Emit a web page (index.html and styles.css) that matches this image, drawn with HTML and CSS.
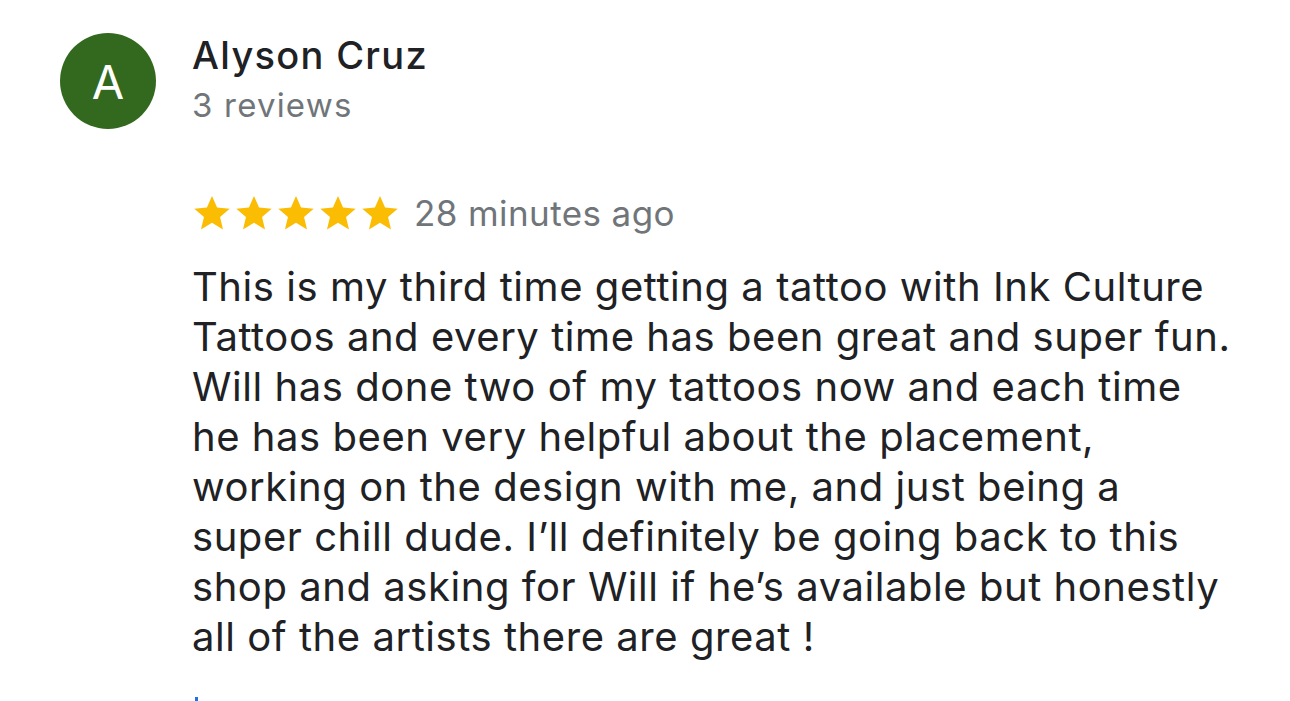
FILE: index.html
```html
<!DOCTYPE html>
<html>
<head>
<meta charset="utf-8">
<link rel="stylesheet" href="styles.css">
</head>
<body>
<div class="review">
  <div class="avatar">A</div>
  <div class="content">
    <div class="name">Alyson Cruz</div>
    <div class="count">3 reviews</div>
    <div class="meta">
      <div class="stars">
        <svg viewBox="0 0 24 24" class="star"><path d="M12 2.3l2.9 6.6 7.2.6-5.5 4.8 1.7 7.1L12 17.6l-6.3 3.8 1.7-7.1L1.9 9.5l7.2-.6z"/></svg>
        <svg viewBox="0 0 24 24" class="star"><path d="M12 2.3l2.9 6.6 7.2.6-5.5 4.8 1.7 7.1L12 17.6l-6.3 3.8 1.7-7.1L1.9 9.5l7.2-.6z"/></svg>
        <svg viewBox="0 0 24 24" class="star"><path d="M12 2.3l2.9 6.6 7.2.6-5.5 4.8 1.7 7.1L12 17.6l-6.3 3.8 1.7-7.1L1.9 9.5l7.2-.6z"/></svg>
        <svg viewBox="0 0 24 24" class="star"><path d="M12 2.3l2.9 6.6 7.2.6-5.5 4.8 1.7 7.1L12 17.6l-6.3 3.8 1.7-7.1L1.9 9.5l7.2-.6z"/></svg>
        <svg viewBox="0 0 24 24" class="star"><path d="M12 2.3l2.9 6.6 7.2.6-5.5 4.8 1.7 7.1L12 17.6l-6.3 3.8 1.7-7.1L1.9 9.5l7.2-.6z"/></svg>
      </div>
      <span class="time">28 minutes ago</span>
    </div>
    <p class="text">This is my third time getting a tattoo with Ink Culture<br>Tattoos and every time has been great and super fun.<br>Will has done two of my tattoos now and each time<br>he has been very helpful about the placement,<br>working on the design with me, and just being a<br>super chill dude. I’ll definitely be going back to this<br>shop and asking for Will if he’s available but honestly<br>all of the artists there are great !</p>
    <div class="more"></div>
  </div>
</div>
</body>
</html>
```
FILE: styles.css
```css
html, body {
  margin: 0;
  padding: 0;
  background: #ffffff;
  overflow: hidden;
}
body {
  font-family: Inter, "Liberation Sans", sans-serif;
  color: #202124;
}
.review {
  display: flex;
  gap: 36px;
  padding: 33px 0 0 60px;
}
.avatar {
  flex: none;
  width: 96px;
  height: 96px;
  border-radius: 50%;
  background: #33691e;
  color: #fff;
  font-size: 47px;
  display: flex;
  align-items: center;
  justify-content: center;
}
.content {
  display: flex;
  flex-direction: column;
}
.name {
  font-size: 38px;
  font-weight: 500;
  line-height: 48px;
  letter-spacing: 1.3px;
  margin-top: -2px;
  color: #202124;
}
.count {
  margin-top: 6px;
  font-size: 33px;
  line-height: 40px;
  letter-spacing: 1.2px;
  color: #70757a;
}
.meta {
  display: flex;
  align-items: center;
  gap: 13px;
  height: 42px;
  margin-top: 67px;
  margin-left: -1px;
}
.stars {
  display: flex;
}
.star {
  width: 42px;
  height: 42px;
  fill: #fbbc04;
}
.time {
  font-size: 35px;
  line-height: 42px;
  letter-spacing: 0.4px;
  color: #70757a;
}
.text {
  margin: 28px 0 0;
  font-size: 40px;
  line-height: 50px;
  letter-spacing: 0.55px;
  color: #202124;
}
.more {
  margin-top: 35px;
  width: 3px;
  height: 6px;
  background: #1a73e8;
  margin-left: 3px;
}
```
